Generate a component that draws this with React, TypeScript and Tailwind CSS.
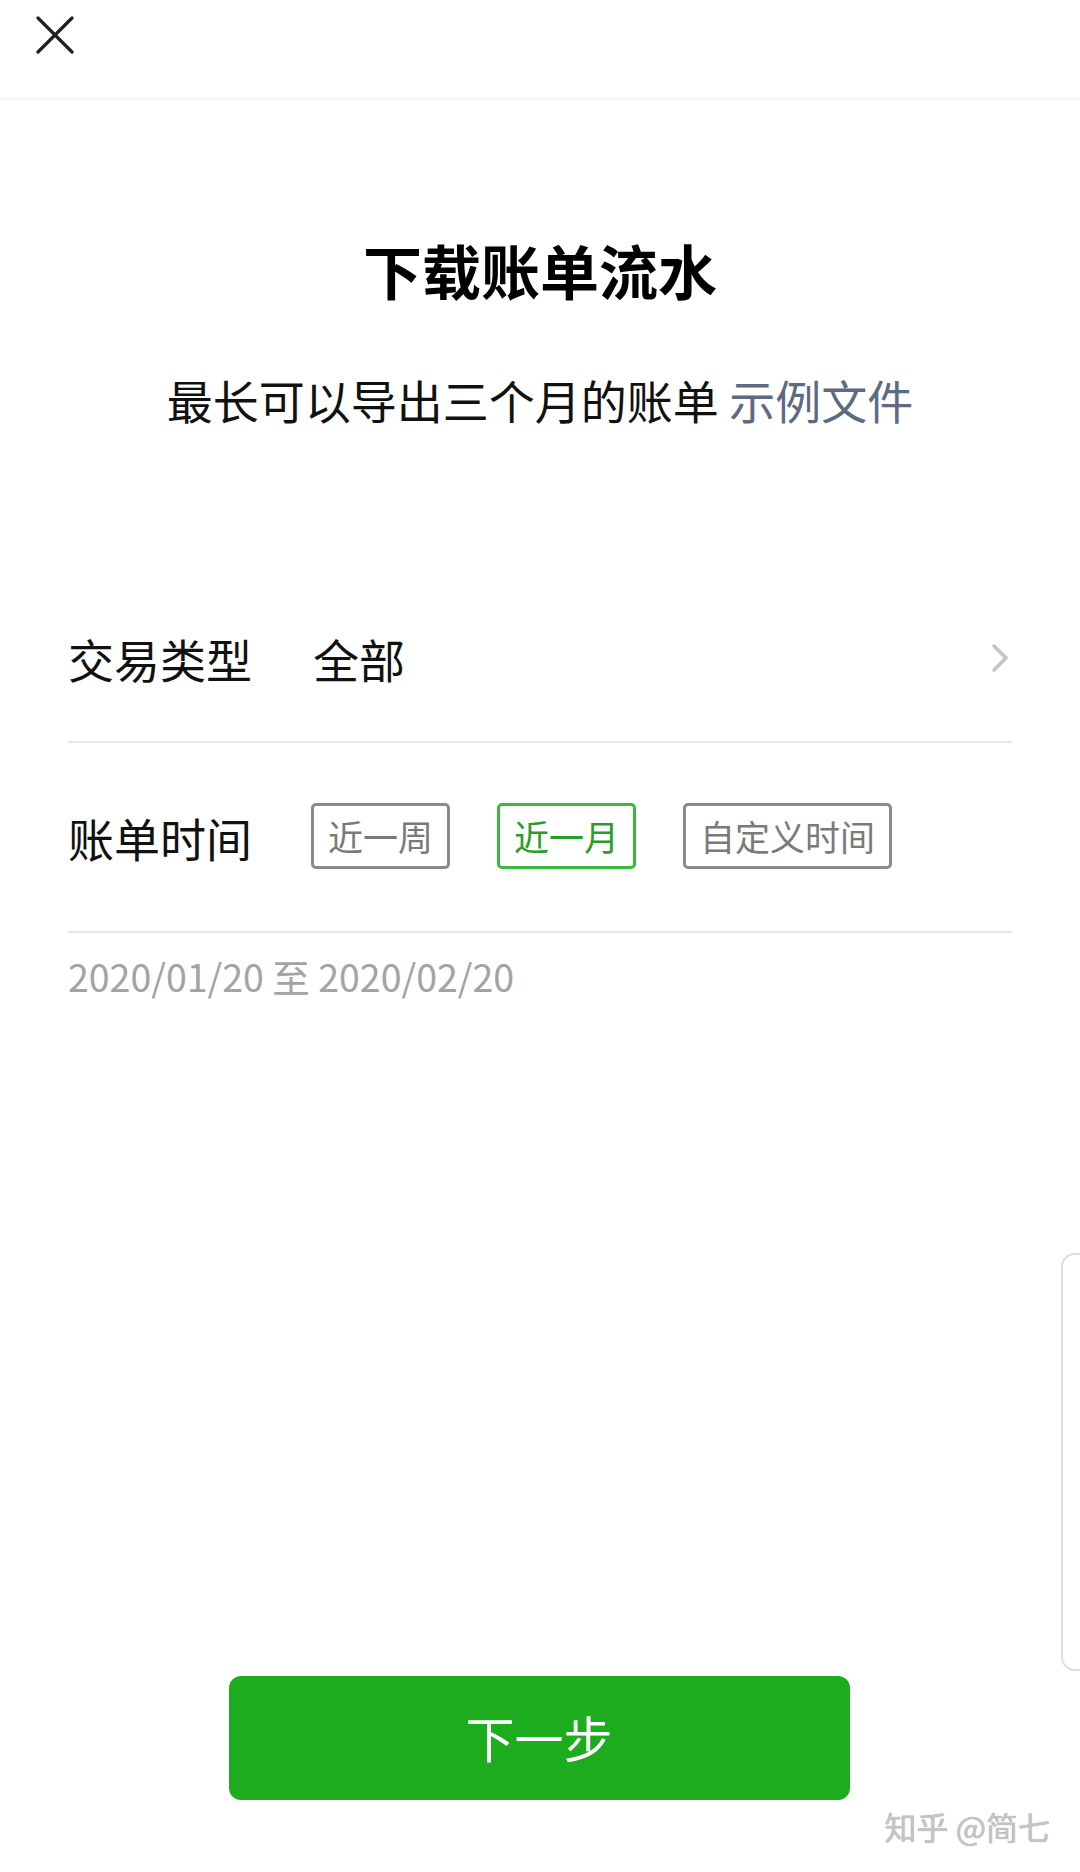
import { useState } from 'react';

const font = { fontFamily: '"Noto Sans CJK SC", "Noto Sans", sans-serif' };

type Range = 'week' | 'month' | 'custom';

export default function App() {
  const [range, setRange] = useState<Range>('month');

  const ranges: { id: Range; label: string }[] = [
    { id: 'week', label: '近一周' },
    { id: 'month', label: '近一月' },
    { id: 'custom', label: '自定义时间' },
  ];

  return (
    <div className="relative min-h-[1872px] w-[1080px] bg-white flex flex-col overflow-hidden" style={font}>
      {/* Header */}
      <div className="h-[100px] flex items-center pl-[36px] border-b-2 border-[#f5f5f5]">
        <svg width="38" height="38" viewBox="0 0 38 38" className="-mt-[28px]">
          <path d="M2 2 L36 36 M36 2 L2 36" stroke="#1f1f1f" strokeWidth="3.2" strokeLinecap="round" />
        </svg>
      </div>

      {/* Title */}
      <h1 className="mt-[140px] text-center text-[59px] leading-[60px] font-bold text-black">下载账单流水</h1>
      <p className="mt-[71px] text-center text-[46px] leading-[56px] text-[#111]">
        最长可以导出三个月的账单 <span className="text-[#5c6a82]">示例文件</span>
      </p>

      {/* Form */}
      <div className="mt-[148px] mx-[68px]">
        <div className="h-[168px] flex items-center border-b-2 border-[#e6e6e6]">
          <span className="w-[245px] text-[46px] leading-[56px] text-[#111]">交易类型</span>
          <span className="flex-1 text-[46px] leading-[56px] text-[#111]">全部</span>
          <svg width="20" height="30" viewBox="0 0 20 30" className="mr-[2px]">
            <path d="M4 3 L16 15 L4 27" fill="none" stroke="#c4c4c4" strokeWidth="3.5" strokeLinecap="round" strokeLinejoin="round" />
          </svg>
        </div>

        <div className="h-[190px] flex items-center border-b-2 border-[#e6e6e6]">
          <span className="w-[243px] text-[46px] leading-[56px] text-[#111]">账单时间</span>
          <div className="flex items-center gap-[47px] -mt-[3px]">
            {ranges.map((r) => {
              const active = r.id === range;
              return (
                <button
                  key={r.id}
                  onClick={() => setRange(r.id)}
                  className={`h-[66px] px-[14px] rounded-[5px] border-[3px] text-[35px] leading-none ${
                    active ? 'border-[#3cb93c] text-[#2a9c2a]' : 'border-[#8a8a8a] text-[#7a7a7a]'
                  }`}
                >
                  {r.label}
                </button>
              );
            })}
          </div>
        </div>

        <p className="mt-[18px] text-[37.5px] leading-[50px] text-[#a3a3a3]">2020/01/20 至 2020/02/20</p>
      </div>

      <div className="flex-1" />

      {/* Next button */}
      <div className="flex justify-center mb-[72px] pr-[2px]">
        <button className="w-[621px] h-[124px] rounded-[12px] bg-[#1dac1d] text-white text-[49px] leading-none pb-[4px]">
          下一步
        </button>
      </div>

      {/* Side handle overlay */}
      <div className="absolute right-0 top-[1253px] w-[19px] h-[418px] rounded-l-[14px] border-2 border-r-0 border-[#dedede]" />

      {/* Watermark */}
      <div className="absolute right-[30px] bottom-[26px] text-[32px] leading-[40px] text-[#c4c4c4] [text-shadow:0_0_1px_#9a9a9a]">
        知乎 @简七
      </div>
    </div>
  );
}
